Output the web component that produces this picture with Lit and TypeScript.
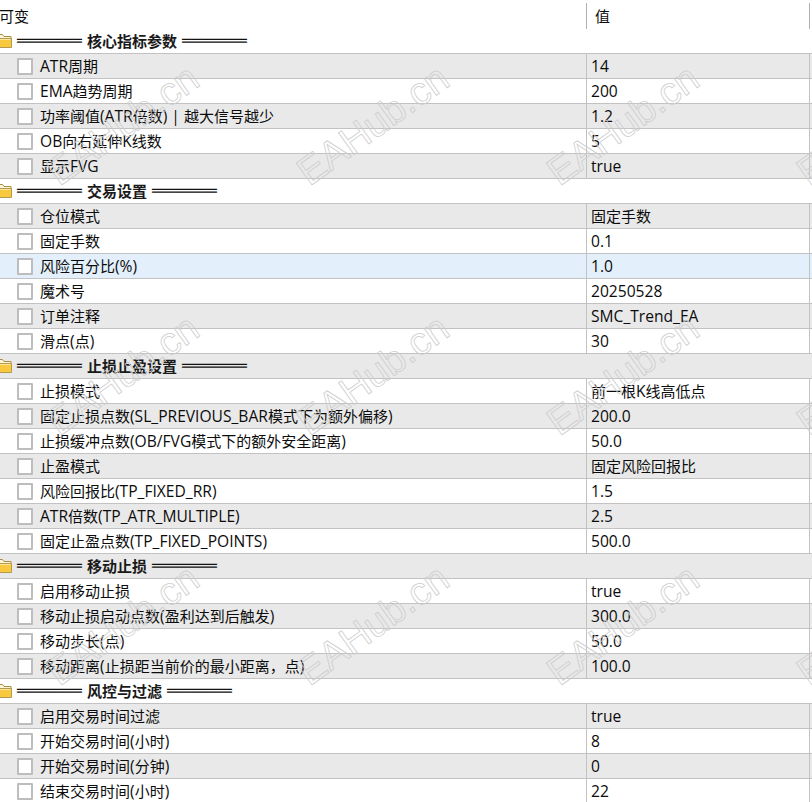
import { LitElement, html, css, svg } from "lit";
import { customElement } from "lit/decorators.js";

type Row = { g?: string; k?: string; v?: string; sel?: boolean };

const rows: Row[] = [
  { g: "核心指标参数" },
  { k: "ATR周期", v: "14" },
  { k: "EMA趋势周期", v: "200" },
  { k: "功率阈值(ATR倍数) | 越大信号越少", v: "1.2" },
  { k: "OB向右延伸K线数", v: "5" },
  { k: "显示FVG", v: "true" },
  { g: "交易设置" },
  { k: "仓位模式", v: "固定手数" },
  { k: "固定手数", v: "0.1" },
  { k: "风险百分比(%)", v: "1.0", sel: true },
  { k: "魔术号", v: "20250528" },
  { k: "订单注释", v: "SMC_Trend_EA" },
  { k: "滑点(点)", v: "30" },
  { g: "止损止盈设置" },
  { k: "止损模式", v: "前一根K线高低点" },
  { k: "固定止损点数(SL_PREVIOUS_BAR模式下为额外偏移)", v: "200.0" },
  { k: "止损缓冲点数(OB/FVG模式下的额外安全距离)", v: "50.0" },
  { k: "止盈模式", v: "固定风险回报比" },
  { k: "风险回报比(TP_FIXED_RR)", v: "1.5" },
  { k: "ATR倍数(TP_ATR_MULTIPLE)", v: "2.5" },
  { k: "固定止盈点数(TP_FIXED_POINTS)", v: "500.0" },
  { g: "移动止损" },
  { k: "启用移动止损", v: "true" },
  { k: "移动止损启动点数(盈利达到后触发)", v: "300.0" },
  { k: "移动步长(点)", v: "50.0" },
  { k: "移动距离(止损距当前价的最小距离，点)", v: "100.0" },
  { g: "风控与过滤" },
  { k: "启用交易时间过滤", v: "true" },
  { k: "开始交易时间(小时)", v: "8" },
  { k: "开始交易时间(分钟)", v: "0" },
  { k: "结束交易时间(小时)", v: "22" },
];

const folder = svg`<svg class="folder" width="16" height="15" viewBox="0 0 16 15">
  <path d="M.5 3.5 V1.5 H6.5 L8 3.5 H15 V6 H.5 Z" fill="#fff6d8" stroke="#a98f45"/>
  <path d="M.5 5.5 H15.5 V14.5 H.5 Z" fill="#f8c93e" stroke="#b39a4e"/>
  <path d="M1.5 6.5 H14.5" stroke="#ffe89a"/>
</svg>`;

const bars = "═══════";

/** Latin runs are drawn slightly larger than the CJK runs, as in the source UI font. */
function runs(text: string) {
  return text
    .split(/([\u2E80-\u9FFF\uFF00-\uFFEF]+)/)
    .filter((s) => s)
    .map((s) =>
      /[\u2E80-\u9FFF\uFF00-\uFFEF]/.test(s)
        ? html`<span>${s}</span>`
        : html`<span class="lat">${s}</span>`
    );
}

@customElement("app-root")
export class AppRoot extends LitElement {
  static styles = css`
    :host {
      display: block;
      position: relative;
      width: 812px;
      height: 802px;
      overflow: hidden;
      background: #fff;
      color: #0c0c0c;
      font-family: "Open Sans", "Noto Sans CJK SC", sans-serif;
      font-size: 15px;
    }
    .lat {
      font-size: 15.6px;
    }
    .head {
      display: grid;
      grid-template-columns: 586px 224px 1fr;
      height: 29px;
      padding-top: 3px;
      box-sizing: border-box;
    }
    .head > div {
      line-height: 26px;
    }
    .head .kh {
      margin-left: -1px;
    }
    .head .vh {
      border-left: 1px solid #b0b0b0;
      border-right: 1px solid #b0b0b0;
      padding-left: 8px;
    }
    .row {
      display: grid;
      grid-template-columns: 586px 224px 1fr;
      height: 25px;
      box-sizing: border-box;
      border-bottom: 1px solid #c2c2c2;
      line-height: 24px;
    }
    .row.odd {
      background: #e9e9e9;
    }
    .row.sel {
      background: #e3f0fb;
    }
    .key {
      display: flex;
      align-items: center;
      padding-left: 17px;
      gap: 7px;
      white-space: nowrap;
    }
    .box {
      width: 16px;
      height: 17px;
      box-sizing: border-box;
      border: 2px solid #bdbdbd;
      border-radius: 1px;
      background: #fff;
      flex: none;
    }
    .val {
      border-left: 1px solid #c2c2c2;
      border-right: 1px solid #c2c2c2;
      padding-left: 4px;
      white-space: nowrap;
    }
    .group {
      display: flex;
      align-items: center;
      height: 25px;
      box-sizing: border-box;
      border-bottom: 1px solid #c2c2c2;
      position: relative;
      padding-left: 17px;
      gap: 5px;
      font-weight: 700;
      color: #1a1a1a;
    }
    .group.odd {
      background: #e9e9e9;
    }
    .title {
      padding-bottom: 2px;
    }
    .folder {
      position: absolute;
      left: -4px;
      top: 4px;
    }
    .bars {
      font-family: "DejaVu Sans", sans-serif;
      font-weight: 400;
      font-size: 15.4px;
      letter-spacing: 0;
      color: #111;
    }
    .marks {
      position: absolute;
      left: -2px;
      top: 0;
      display: grid;
      grid-template-columns: repeat(4, 250px);
      grid-auto-rows: 250px;
      pointer-events: none;
    }
    .marks span {
      display: flex;
      align-items: center;
      justify-content: center;
      transform: rotate(-35.7deg);
      font-family: "Liberation Sans", sans-serif;
      font-size: 39px;
      color: transparent;
      -webkit-text-stroke: 0.8px #cdcdcd;
      white-space: nowrap;
    }
  `;

  render() {
    return html`
      <div class="head">
        <div class="kh">可变</div>
        <div class="vh">值</div>
      </div>
      ${rows.map((r, i) => {
        const odd = i % 2 === 1 ? "odd" : "";
        if (r.g) {
          return html`<div class="group ${odd}">
            ${folder}<span class="bars">${bars}</span><span class="title">${r.g}</span
            ><span class="bars">${bars}</span>
          </div>`;
        }
        return html`<div class="row ${odd} ${r.sel ? "sel" : ""}">
          <div class="key"><span class="box"></span><span>${runs(r.k!)}</span></div>
          <div class="val">${runs(r.v!)}</div>
        </div>`;
      })}
      <div class="marks">
        ${Array.from({ length: 16 }, () => html`<span>EAHub.cn</span>`)}
      </div>
    `;
  }
}
